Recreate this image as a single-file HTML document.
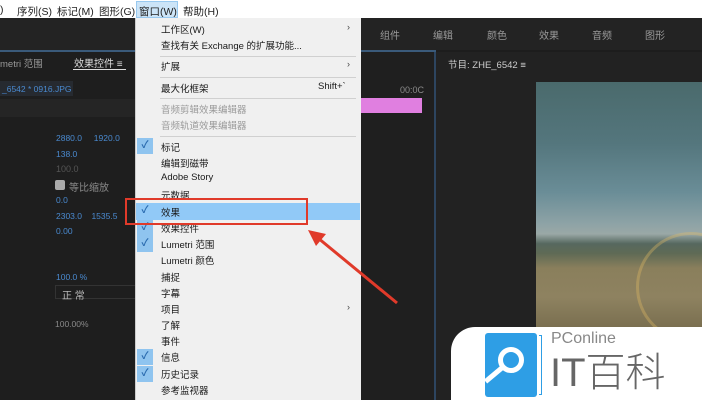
<!DOCTYPE html>
<html><head><meta charset="utf-8"><style>
*{margin:0;padding:0;box-sizing:border-box}
body{width:702px;height:400px;overflow:hidden;background:#1d1d1d;position:relative;font-family:"Liberation Sans","Noto Sans CJK SC",sans-serif}
.a{position:absolute;white-space:nowrap}
.mb{font-size:10.5px;color:#222;top:4px}
.d{font-size:9px;color:#8a8a8a}
.b{font-size:8.5px;color:#4a8ad0}
.mi{position:absolute;left:161px;font-size:9.5px;color:#1a1a1a;white-space:nowrap}
.g{color:#9a9a9a}
.ck{position:absolute;left:137px;width:16px;height:16px;background:#8fc4ef;color:#2b6cb0;font-size:10px;text-align:center;line-height:16px;font-weight:bold}
.sep{position:absolute;left:160px;width:196px;height:1px;background:#d0d0d0}
.ws{font-size:10px;color:#9a9a9a;top:27px}
</style></head><body>
<div class="a" style="left:0;top:0;width:702px;height:18px;background:#fff"></div>
<div class="a mb" style="left:0">)</div>
<div class="a mb" style="left:17px">序列(S)</div>
<div class="a mb" style="left:57px">标记(M)</div>
<div class="a mb" style="left:99px">图形(G)</div>
<div class="a" style="left:136px;top:1px;width:42px;height:17px;background:#cce4f7;border:1px solid #99c9ef"></div>
<div class="a mb" style="left:139px">窗口(W)</div>
<div class="a mb" style="left:183px">帮助(H)</div>
<div class="a" style="left:0;top:18px;width:702px;height:32px;background:#232323"></div>
<div class="a" style="left:0;top:50px;width:436px;height:2px;background:#3a5a7a"></div>
<div class="a ws" style="left:380px">组件</div>
<div class="a ws" style="left:433px">编辑</div>
<div class="a ws" style="left:487px">颜色</div>
<div class="a ws" style="left:539px">效果</div>
<div class="a ws" style="left:592px">音频</div>
<div class="a ws" style="left:645px">图形</div>
<div class="a" style="left:0;top:52px;width:360px;height:348px;background:#1e1e1e"></div>
<div class="a" style="left:0;top:56px;font-size:9.5px;color:#999">metri 范围</div>
<div class="a" style="left:74px;top:55px;font-size:10px;color:#ddd">效果控件 ≡</div>
<div class="a" style="left:73px;top:69px;width:53px;height:1px;background:#ddd"></div>
<div class="a" style="left:0;top:81px;width:73px;height:15px;background:#262a30"></div>
<div class="a b" style="left:2px;top:84px">_6542 * 0916.JPG</div>
<div class="a" style="left:0;top:99px;width:136px;height:18px;background:#252525"></div>
<div class="a b" style="left:56px;top:133px">2880.0&nbsp;&nbsp;&nbsp;&nbsp;&nbsp;1920.0</div>
<div class="a b" style="left:56px;top:149px">138.0</div>
<div class="a d" style="left:56px;top:164px;color:#555">100.0</div>
<div class="a" style="left:55px;top:180px;width:10px;height:10px;background:#aaa;border-radius:2px"></div>
<div class="a d" style="left:69px;top:179px;font-size:10px">等比缩放</div>
<div class="a b" style="left:56px;top:195px">0.0</div>
<div class="a b" style="left:56px;top:211px">2303.0&nbsp;&nbsp;&nbsp;&nbsp;1535.5</div>
<div class="a b" style="left:56px;top:226px">0.00</div>
<div class="a b" style="left:56px;top:272px">100.0 %</div>
<div class="a" style="left:55px;top:285px;width:81px;height:14px;border:1px solid #333"></div>
<div class="a d" style="left:62px;top:287px;font-size:10px;color:#bbb">正 常</div>
<div class="a d" style="left:55px;top:319px;font-size:8.5px">100.00%</div>
<div class="a" style="left:360px;top:52px;width:74px;height:348px;background:#1f1f1f"></div>
<div class="a" style="left:434px;top:52px;width:2px;height:348px;background:#2d4560"></div>
<div class="a d" style="left:400px;top:85px">00:0C</div>
<div class="a" style="left:360px;top:98px;width:62px;height:15px;background:#e07fe0"></div>
<div class="a" style="left:436px;top:52px;width:266px;height:348px;background:#222"></div>
<div class="a" style="left:448px;top:57px;font-size:9.5px;color:#ccc">节目: ZHE_6542 ≡</div>
<div class="a" style="left:536px;top:82px;width:166px;height:245px;overflow:hidden;background:linear-gradient(180deg,#4a6a6c 0%,#54767d 25%,#6a8d97 45%,#8ea3a6 58%,#9aa8a6 62%,#56685f 66%,#5f6a55 70%,#8a7f5c 76%,#8e8260 88%,#7a6f50 100%)">
<div class="a" style="left:100px;top:150px;width:110px;height:110px;border-radius:50%;border:3px solid rgba(230,190,100,.35)"></div>
</div>
<div class="a" style="left:451px;top:327px;width:251px;height:73px;background:#fff;border-top-left-radius:24px"></div>
<div class="a" style="left:485px;top:333px;width:52px;height:64px;background:#2e9ee5;border-radius:3px"></div>
<div class="a" style="left:539px;top:335px;width:3px;height:60px;border:1px solid #2e9ee5;border-left:none"></div>
<div class="a" style="left:498px;top:347px;width:26px;height:26px;border:5px solid #fff;border-radius:50%"></div>
<div class="a" style="left:483px;top:372px;width:22px;height:5px;background:#fff;transform:rotate(-40deg)"></div>
<div class="a" style="left:551px;top:330px;font-size:16px;color:#888">PConline</div>
<div class="a" style="left:550px;top:350px;font-size:40px;line-height:46px;color:#666;font-weight:300">IT百科</div>
<div class="a" style="left:135px;top:18px;width:226px;height:382px;background:#f0f0f0;border-left:1px solid #ccc"></div>
<div class="mi" style="top:22px">工作区(W)</div><div class="a" style="left:347px;top:22px;font-size:9px;color:#444">›</div>
<div class="mi" style="top:38px">查找有关 Exchange 的扩展功能...</div>
<div class="sep" style="top:56px"></div>
<div class="mi" style="top:59px">扩展</div><div class="a" style="left:347px;top:59px;font-size:9px;color:#444">›</div>
<div class="sep" style="top:77px"></div>
<div class="mi" style="top:81px">最大化框架</div><div class="a" style="left:318px;top:81px;font-size:9.5px;color:#1a1a1a">Shift+`</div>
<div class="sep" style="top:98px"></div>
<div class="mi g" style="top:102px">音频剪辑效果编辑器</div>
<div class="mi g" style="top:118px">音频轨道效果编辑器</div>
<div class="sep" style="top:136px"></div>
<div class="ck" style="top:138px">✓</div><div class="mi" style="top:140px">标记</div>
<div class="mi" style="top:156px">编辑到磁带</div>
<div class="mi" style="top:172px">Adobe Story</div>
<div class="mi" style="top:188px">元数据</div>
<div class="a" style="left:136px;top:203px;width:224px;height:17px;background:#91c9f7"></div>
<div class="ck" style="top:203px;background:none">✓</div><div class="mi" style="top:205px">效果</div>
<div class="ck" style="top:220px">✓</div><div class="mi" style="top:221px">效果控件</div>
<div class="ck" style="top:236px">✓</div><div class="mi" style="top:237px">Lumetri 范围</div>
<div class="mi" style="top:253px">Lumetri 颜色</div>
<div class="mi" style="top:270px">捕捉</div>
<div class="mi" style="top:286px">字幕</div>
<div class="mi" style="top:302px">项目</div><div class="a" style="left:347px;top:302px;font-size:9px;color:#444">›</div>
<div class="mi" style="top:318px">了解</div>
<div class="mi" style="top:334px">事件</div>
<div class="ck" style="top:349px">✓</div><div class="mi" style="top:350px">信息</div>
<div class="ck" style="top:366px">✓</div><div class="mi" style="top:367px">历史记录</div>
<div class="mi" style="top:383px">参考监视器</div>
<div class="a" style="left:125px;top:198px;width:183px;height:27px;border:2px solid #e03a2a"></div>
<svg class="a" style="left:0;top:0" width="702" height="400"><line x1="397" y1="303" x2="318" y2="238" stroke="#e03a2a" stroke-width="3"/><polygon points="308,230 326,234 316,246" fill="#e03a2a"/></svg>
</body></html>
